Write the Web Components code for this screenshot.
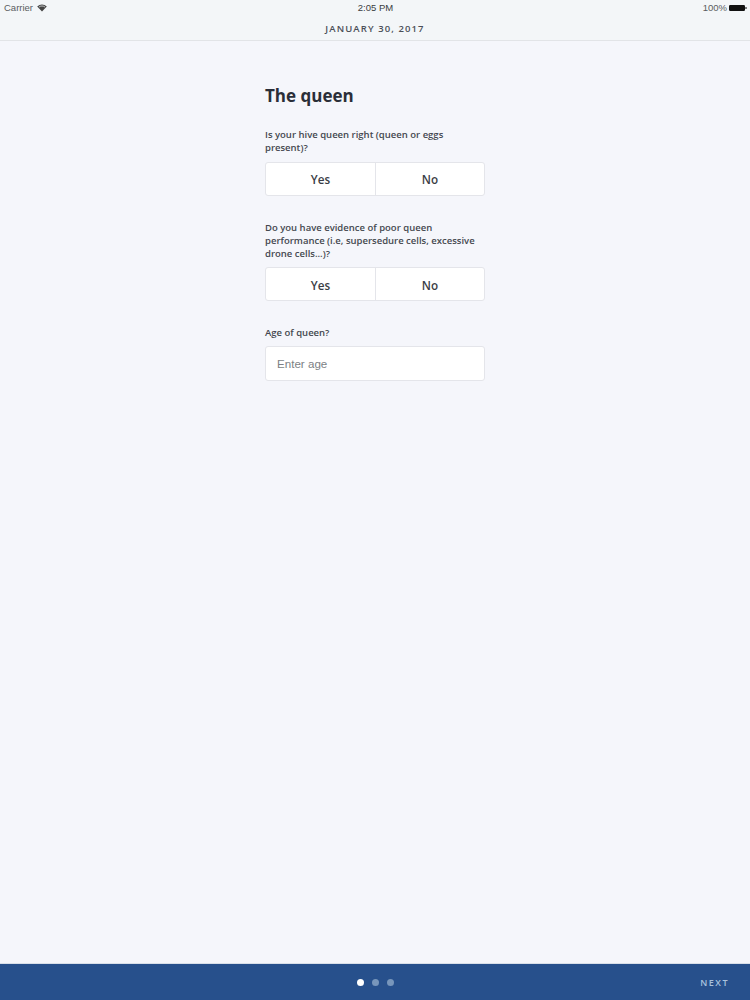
<!DOCTYPE html>
<html>
<head>
<meta charset="utf-8">
<style>
  html, body { margin: 0; height: 100%; }
  body { background: #f5f6fb; font-family: "Open Sans", sans-serif; }
  hive-page { height: 1000px; }
</style>
</head>
<body>
<hive-page>
  <status-bar slot="top"></status-bar>
  <date-bar slot="top">January 30, 2017</date-bar>
  <h1-title>The queen</h1-title>
  <yes-no>Is your hive queen right (queen or eggs present)?</yes-no>
  <yes-no>Do you have evidence of poor queen performance (i.e, supersedure cells, excessive drone cells...)?</yes-no>
  <age-field placeholder="Enter age">Age of queen?</age-field>
  <pager-bar slot="bottom"></pager-bar>
</hive-page>

<script>
(function() {
  const define = (name, html) => {
    customElements.define(name, class extends HTMLElement {
      constructor() {
        super();
        this.attachShadow({ mode: 'open' }).innerHTML = html;
      }
    });
  };

  //=== Page frame
  define('hive-page', `
<style>
:host { display: flex; flex-direction: column; }
.form { flex: 1; width: 220px; margin: 0 auto 0 265px; padding-top: 42px; box-sizing: border-box; }
</style>
<slot name="top"></slot>
<div class="form"><slot></slot></div>
<slot name="bottom"></slot>
`);

  //=== iOS status bar
  define('status-bar', `
<style>
:host {
  display: grid; grid-template-columns: 1fr auto 1fr; align-items: center;
  height: 15px; padding: 0 3px 0 4px; background: #f3f6f8; color: #5a5c60;
  font: 9.5px/15px "Liberation Sans", Arial, sans-serif;
}
.left, .right { display: flex; align-items: center; gap: 4px; }
.right { justify-content: flex-end; gap: 2px; }
.time { color: #3a3c40; }
svg { display: block; }
</style>
<div class="left">Carrier
  <svg width="10" height="8" viewBox="0 0 10 8"><path d="M5 7.6 .2 2.6C3-.3 7-.3 9.8 2.6z" fill="#444"/><path d="M1.9 3.1C3.7 1.6 6.3 1.6 8.1 3.1" fill="none" stroke="#f3f6f8" stroke-width=".7"/></svg>
</div>
<div class="time">2:05 PM</div>
<div class="right">100%
  <svg width="18" height="6" viewBox="0 0 18 6"><rect x="0" y="0" width="16" height="6" rx="1.2" fill="#111"/><rect x="16.4" y="2" width="1.2" height="2" fill="#333"/></svg>
</div>
`);

  //=== Date header
  define('date-bar', `
<style>
:host {
  display: block; height: 25px; background: #f3f6f8; border-bottom: 1px solid #e2e4e7;
  text-align: center; color: #4b4f57;
  font: 600 9.5px/27px "Open Sans", sans-serif; letter-spacing: 1.1px; text-transform: uppercase;
}
</style>
<slot></slot>
`);

  define('h1-title', `
<style>
:host {
  display: block; margin-bottom: 20px; color: #2a2e38;
  font: 700 17px/25px "Open Sans", sans-serif;
}
</style>
<slot></slot>
`);

  //=== Yes / No question
  define('yes-no', `
<style>
:host { display: block; margin-bottom: 25px; }
label { display: block; margin-bottom: 7px; color: #44484f; font: 600 9.5px/13.3px "Open Sans", sans-serif; }
.group {
  display: grid; grid-template-columns: 1fr 1fr; height: 34px; box-sizing: border-box;
  background: #fff; border: 1px solid #e4e5ea; border-radius: 3px;
}
span { display: flex; align-items: center; justify-content: center; padding-top: 1px; color: #3a3d45; font: 600 11.7px "Open Sans", sans-serif; }
span + span { border-left: 1px solid #e4e5ea; }
</style>
<label><slot></slot></label>
<div class="group"><span>Yes</span><span>No</span></div>
`);

  //=== Text field
  customElements.define('age-field', class extends HTMLElement {
    constructor() {
      super();
      const shadowRoot = this.attachShadow({ mode: 'open' });
      shadowRoot.innerHTML = `
<style>
:host { display: block; }
label { display: block; margin-bottom: 6px; color: #44484f; font: 600 9.5px/13.3px "Open Sans", sans-serif; }
.input {
  height: 35px; box-sizing: border-box; padding-left: 11px; background: #fff;
  border: 1px solid #e4e5ea; border-radius: 3px; color: #7c7f84;
  font: 11.6px/33px "Liberation Sans", Arial, sans-serif;
}
</style>
<label><slot></slot></label>
<div class="input">${this.getAttribute('placeholder')}</div>
`;
    }
  });

  //=== Footer
  define('pager-bar', `
<style>
:host {
  display: grid; grid-template-columns: 1fr auto 1fr; align-items: center;
  height: 36px; background: #27508c; border-top: 1px solid #d9dfe9;
}
.dots { grid-column: 2; display: flex; gap: 8px; }
.dots i { width: 7px; height: 7px; border-radius: 50%; background: #7896bb; }
.dots i:first-child { background: #fff; }
.next { text-align: right; padding-right: 21px; color: #a9c2de; font: 600 9px "Open Sans", sans-serif; letter-spacing: 1.5px; }
</style>
<div class="dots"><i></i><i></i><i></i></div>
<div class="next">NEXT</div>
`);
})();
</script>
</body>
</html>
